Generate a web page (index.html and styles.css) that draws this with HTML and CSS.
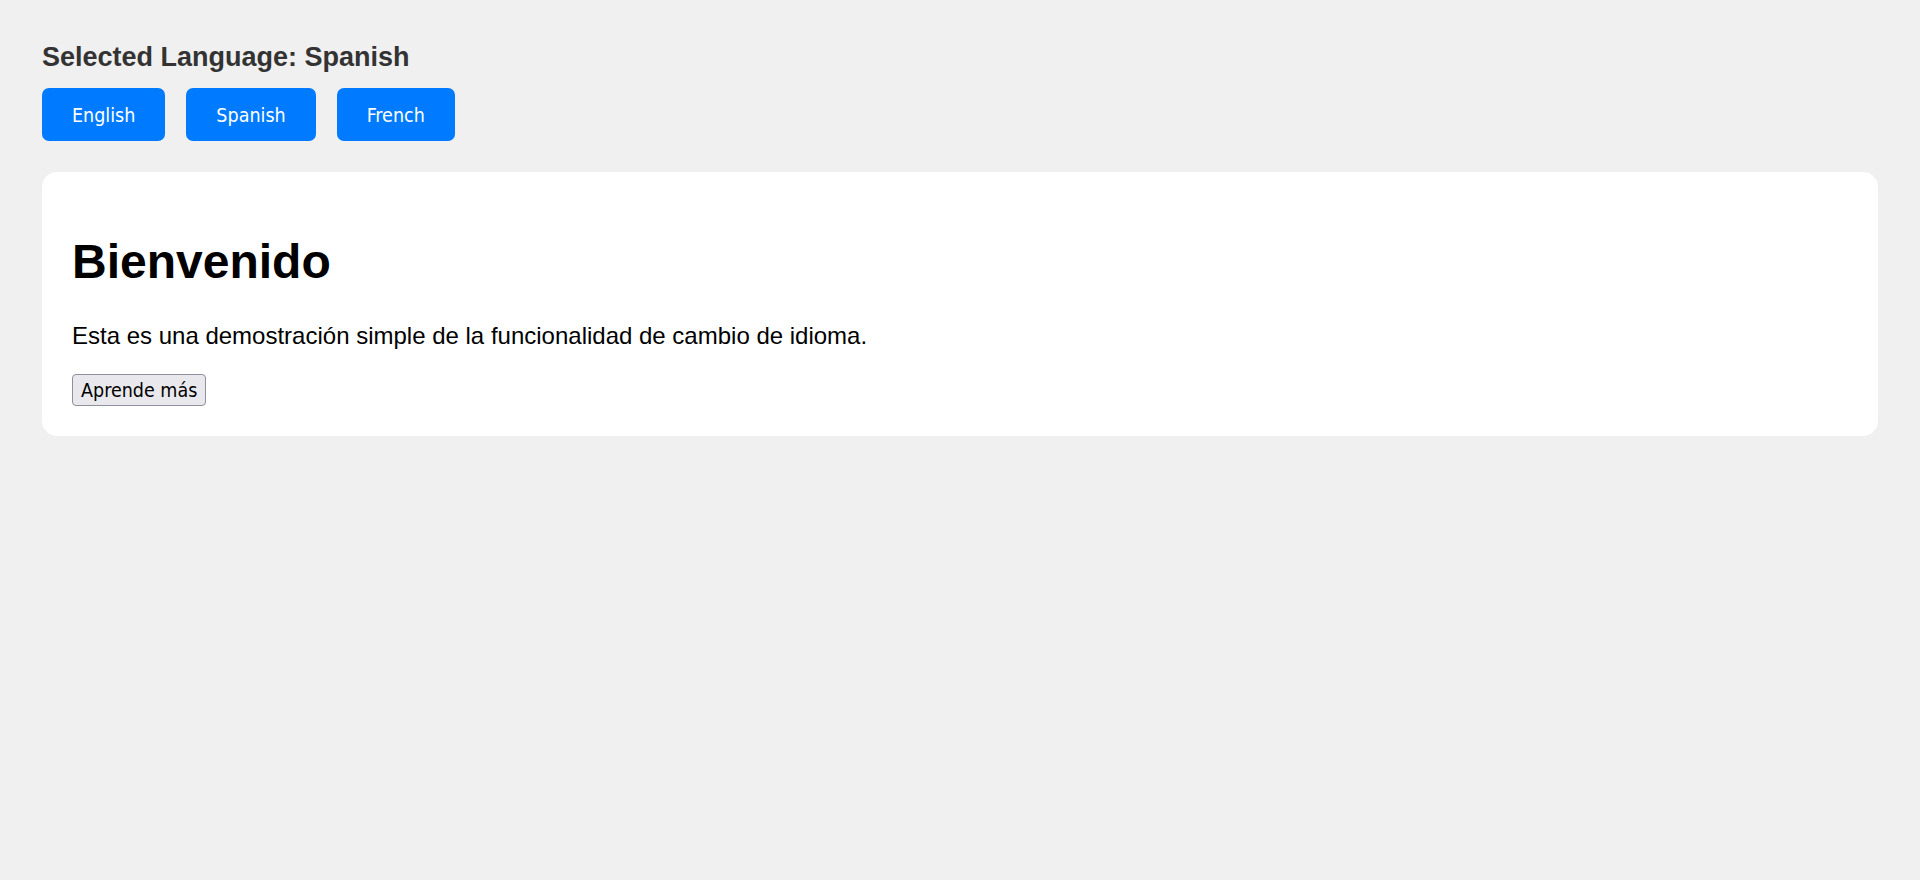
FILE: index.html
```html
<!DOCTYPE html>
<html lang="es">
<head>
<meta charset="utf-8">
<title>Language Switcher</title>
<link rel="stylesheet" href="styles.css">
</head>
<body>
  <div class="page">
    <h3 class="selected">Selected Language: Spanish</h3>
    <div class="lang-buttons">
      <button class="lang-btn">English</button>
      <button class="lang-btn">Spanish</button>
      <button class="lang-btn">French</button>
    </div>
    <div class="card">
      <h1 class="card-title">Bienvenido</h1>
      <p class="card-text">Esta es una demostración simple de la funcionalidad de cambio de idioma.</p>
      <div class="card-actions">
        <button class="learn-btn">Aprende más</button>
      </div>
    </div>
  </div>
</body>
</html>
```

FILE: styles.css
```css
html, body {
  margin: 0;
  padding: 0;
}

body {
  background: #f0f0f0;
  font-family: "Liberation Sans", Arial, sans-serif;
  color: #000;
}

.page {
  padding: 42px;
}

.selected {
  margin: 0;
  font-size: 27px;
  font-weight: bold;
  color: #333;
  line-height: 31px;
}

.lang-buttons {
  display: flex;
  gap: 21px;
  margin-top: 15px;
}

.lang-btn {
  height: 53px;
  padding: 2px 30px 0;
  background: #007bff;
  color: #fff;
  border: none;
  border-radius: 7px;
  font-family: "DejaVu Sans Condensed", "DejaVu Sans", sans-serif;
  font-stretch: condensed;
  font-size: 19.5px;
  cursor: pointer;
}

.card {
  margin-top: 31px;
  background: #fff;
  border-radius: 15px;
  padding: 30px;
}

.card-title {
  margin: 32px 0 0;
  font-size: 48px;
  font-weight: bold;
  line-height: 55px;
}

.card-text {
  margin: 33px 0 24px;
  font-size: 24px;
  line-height: 28px;
}

.card-actions {
  display: flex;
}

.learn-btn {
  height: 32px;
  padding: 1px 8px 0;
  background: #e9e9ed;
  color: #000;
  border: 1px solid #8f8f9d;
  border-radius: 4px;
  font-family: "DejaVu Sans Condensed", "DejaVu Sans", sans-serif;
  font-stretch: condensed;
  font-size: 19.5px;
}
```
